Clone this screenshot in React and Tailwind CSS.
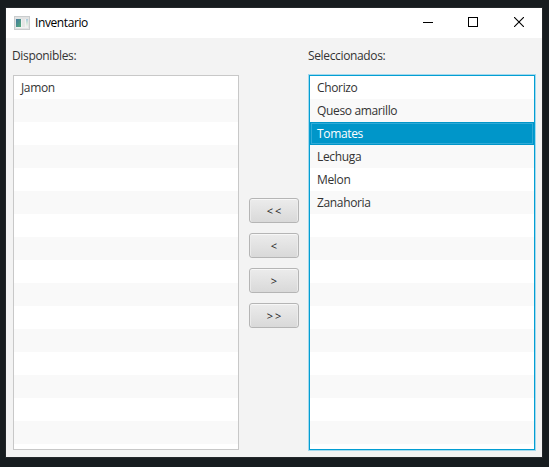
const available = ["Jamon"];
const selected = ["Chorizo", "Queso amarillo", "Tomates", "Lechuga", "Melon", "Zanahoria"];
const ROWS = 17;

function ListView({ items, active, focused }) {
  return (
    <div
      className={
        "flex h-[375px] w-[226px] flex-col overflow-hidden border bg-white tracking-[-0.35px] " +
        (focused ? "border-[#039ed3] shadow-[0_0_0_1px_#a3d9ed]" : "border-[#c8c8c8]")
      }
    >
      {Array.from({ length: ROWS }, (_, i) => {
        const on = items[i] !== undefined && items[i] === active;
        return (
          <div
            key={i}
            className={
              "flex h-[23px] shrink-0 items-center pt-px pl-[7px] " +
              (on
                ? "bg-[#0096c9] text-white shadow-[inset_0_0_0_1px_#0096c9,inset_0_0_0_2px_#30aad7]"
                : i % 2
                  ? "bg-[#f9f9f9]"
                  : "bg-white")
            }
          >
            {items[i]}
          </div>
        );
      })}
    </div>
  );
}

function MoveButton({ children }) {
  return (
    <button className="flex h-[25px] w-[50px] items-center justify-center rounded-[3px] border border-[#b5b5b5] bg-linear-to-b from-[#ececec] to-[#d9d9d9] pt-px pl-[2px] text-[11px] tracking-[2px] text-[#222222] shadow-[inset_0_1px_0_#f7f7f7,inset_1px_0_0_#ebebeb,inset_-1px_0_0_#ebebeb]">
      {children}
    </button>
  );
}

function AppIcon() {
  return (
    <svg width="16" height="14" viewBox="0 0 16 14" shapeRendering="crispEdges">
      <defs>
        <linearGradient id="pane" x1="0" y1="0" x2="1" y2="1">
          <stop offset="0" stopColor="#4278a0" />
          <stop offset="1" stopColor="#55ad79" />
        </linearGradient>
        <linearGradient id="side" x1="0" y1="0" x2="0" y2="1">
          <stop offset="0" stopColor="#a9c9e0" />
          <stop offset="0.5" stopColor="#d2e8d9" />
          <stop offset="1" stopColor="#f3f3f3" />
        </linearGradient>
      </defs>
      <rect width="16" height="14" fill="#c9cccd" />
      <rect x="1" y="1" width="14" height="12" fill="#e2e3e3" />
      <rect x="2" y="3" width="12" height="9" fill="#f1f2f2" />
      <rect x="2" y="3" width="5" height="8" fill="url(#pane)" />
      <rect x="8" y="3" width="3" height="8" fill="#e5e6e5" />
      <rect x="12" y="3" width="2" height="8" fill="url(#side)" />
    </svg>
  );
}

export default function App() {
  return (
    <div className="h-[467px] w-[549px] bg-[#171c1f] pt-2 pl-[6px] font-['Open_Sans','Noto_Sans',sans-serif] text-[12px] leading-4 text-[#333333]">
      <div className="flex h-[449px] w-[536px] flex-col bg-[#f3f3f3] shadow-[0_0_0_1px_#23272a]">
        <header className="flex h-[30px] items-center bg-white pr-[18px] pl-2 text-black">
          <AppIcon />
          <h1 className="ml-[5px] tracking-[-0.4px]">Inventario</h1>
          <div className="ml-auto flex items-center pb-[3px]">
            <svg width="10" height="10" shapeRendering="crispEdges">
              <path d="M0 5.5h10" stroke="#000" />
            </svg>
            <svg width="10" height="10" className="ml-[35px]" shapeRendering="crispEdges">
              <rect x=".5" y=".5" width="9" height="9" fill="none" stroke="#000" />
            </svg>
            <svg width="10" height="10" className="ml-[36px]">
              <path d="M0 0l10 10M10 0L0 10" stroke="#000" strokeWidth="1.1" />
            </svg>
          </div>
        </header>
        <main className="flex pt-[10px] pl-[6px]">
          <section>
            <h2 className="mb-[11px] tracking-[-0.35px]">Disponibles:</h2>
            <div className="pl-px">
              <ListView items={available} />
            </div>
          </section>
          <div className="ml-[10px] flex flex-col gap-[10px] pt-[150px]">
            <MoveButton>&lt;&lt;</MoveButton>
            <MoveButton>&lt;</MoveButton>
            <MoveButton>&gt;</MoveButton>
            <MoveButton>&gt;&gt;</MoveButton>
          </div>
          <section className="ml-[9px]">
            <h2 className="mb-[11px] tracking-[-0.35px]">Seleccionados:</h2>
            <div className="pl-px">
              <ListView items={selected} active="Tomates" focused />
            </div>
          </section>
        </main>
      </div>
    </div>
  );
}
